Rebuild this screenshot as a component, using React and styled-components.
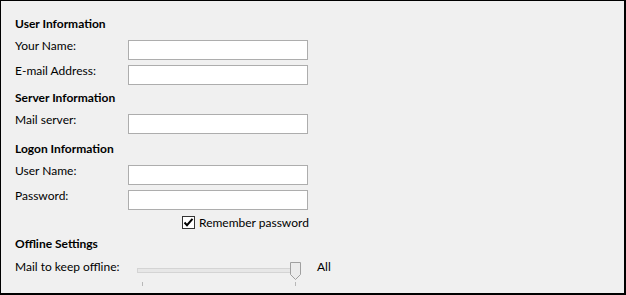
import React from "react";
import styled, { createGlobalStyle } from "styled-components";

const Global = createGlobalStyle`
  html, body { margin: 0; padding: 0; background: #f0f0f0; }
  * { box-sizing: border-box; }
`;

const Frame = styled.div`
  width: 626px;
  height: 295px;
  background: #f0f0f0;
  border-style: solid;
  border-color: #000;
  border-width: 1px 2px 2px 1px;
  padding: 15px 0 0 14px;
  display: flex;
  flex-direction: column;
  font-family: Lato, "Noto Sans", sans-serif;
  font-size: 12px;
  color: #000;
`;

const Heading = styled.div`
  font-weight: bold;
  line-height: 15px;
  height: 15px;
  margin-top: ${(p) => p.$top || 0}px;
  margin-bottom: ${(p) => p.$bottom ?? 9}px;
`;

const Row = styled.div`
  display: grid;
  grid-template-columns: 113px auto;
  align-items: start;
  height: 20px;
  margin-bottom: ${(p) => p.$gap ?? 5}px;
`;

const Label = styled.label`
  line-height: 11px;
  padding-top: 0;
  white-space: nowrap;
`;

const TextBox = styled.input`
  width: 180px;
  height: 20px;
  margin: 0;
  border: 1px solid #adadad;
  background: #fff;
  outline: none;
  font: inherit;
  padding: 0 3px;
`;

const CheckRow = styled.label`
  display: flex;
  align-items: center;
  gap: 4px;
  height: 13px;
  margin-left: 167px;
  line-height: 13px;
  white-space: nowrap;
`;

const Box = styled.span`
  width: 13px;
  height: 13px;
  border: 1px solid #333;
  background: #fff;
  display: flex;
  align-items: center;
  justify-content: center;
`;

const SliderRow = styled.div`
  display: grid;
  grid-template-columns: 113px 181px auto;
  align-items: start;
  height: 28px;
`;

const SliderArt = styled.svg`
  display: block;
  margin-left: 9px;
`;

const EndLabel = styled.span`
  line-height: 11px;
  padding-left: 8px;
`;

export default function App() {
  return (
    <>
      <Global />
      <Frame>
        <Heading>User Information</Heading>
        <Row>
          <Label>Your Name:</Label>
          <TextBox />
        </Row>
        <Row $gap={0}>
          <Label>E-mail Address:</Label>
          <TextBox />
        </Row>
        <Heading $top={5}>Server Information</Heading>
        <Row $gap={0}>
          <Label>Mail server:</Label>
          <TextBox />
        </Row>
        <Heading $top={7}>Logon Information</Heading>
        <Row>
          <Label>User Name:</Label>
          <TextBox />
        </Row>
        <Row $gap={6}>
          <Label>Password:</Label>
          <TextBox type="password" />
        </Row>
        <CheckRow>
          <Box>
            <svg width="11" height="11" viewBox="0 0 11 11">
              <path d="M1.5 5.5 L4 8.2 L9.5 1.8" fill="none" stroke="#000" strokeWidth="2" />
            </svg>
          </Box>
          Remember password
        </CheckRow>
        <Heading $top={7} $bottom={10}>Offline Settings</Heading>
        <SliderRow>
          <Label>Mail to keep offline:</Label>
          <SliderArt width="170" height="28" viewBox="0 0 170 28">
            <rect x="0.5" y="7.5" width="161" height="4" fill="#e7e7e7" stroke="#d4d4d4" />
            <path d="M153.5 1.5 H163.5 V13.5 L158.5 18.5 L153.5 13.5 Z" fill="#ececec" stroke="#a0a0a0" />
            <line x1="5.5" y1="21" x2="5.5" y2="25" stroke="#b8b8b8" />
            <line x1="158.5" y1="21" x2="158.5" y2="25" stroke="#b8b8b8" />
          </SliderArt>
          <EndLabel>All</EndLabel>
        </SliderRow>
      </Frame>
    </>
  );
}
